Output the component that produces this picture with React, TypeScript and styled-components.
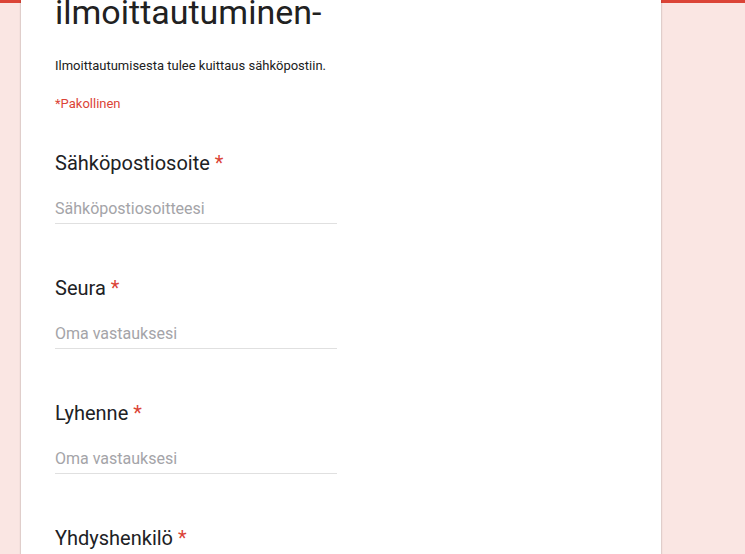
import styled, { createGlobalStyle } from 'styled-components';

const GlobalStyle = createGlobalStyle`
  html, body {
    margin: 0;
    padding: 0;
    background: #fae6e3;
    overflow: hidden;
  }
`;

const questions = [
  { label: 'Sähköpostiosoite', placeholder: 'Sähköpostiosoitteesi' },
  { label: 'Seura', placeholder: 'Oma vastauksesi' },
  { label: 'Lyhenne', placeholder: 'Oma vastauksesi' },
  { label: 'Yhdyshenkilö', placeholder: 'Oma vastauksesi' },
];

const App = () => {
  return (
    <Page>
      <GlobalStyle />
      <Card>
        <Title>ilmoittautuminen-</Title>
        <Description>Ilmoittautumisesta tulee kuittaus sähköpostiin.</Description>
        <Required>*Pakollinen</Required>
        {questions.map((q) => (
          <Question key={q.label}>
            <Label>
              {q.label} <Star>*</Star>
            </Label>
            <Input placeholder={q.placeholder} />
          </Question>
        ))}
      </Card>
    </Page>
  );
};

export default App;

const Page = styled.div`
  height: 554px;
  border-top: 3px solid #db4437;
  padding-left: 21px;
  box-sizing: border-box;
  font-family: Roboto, 'Liberation Sans', sans-serif;
`;

const Card = styled.div`
  display: flex;
  flex-direction: column;
  align-items: flex-start;
  width: 640px;
  height: 600px;
  margin-top: -3px;
  background: #fff;
  box-shadow: 0 0 2px rgba(0, 0, 0, 0.2), 0 2px 2px rgba(0, 0, 0, 0.14);
  padding: 0 34px;
  box-sizing: border-box;
`;

const Title = styled.div`
  font-size: 34px;
  line-height: 40px;
  margin-top: -8px;
  color: #212121;
`;

const Description = styled.div`
  font-size: 13px;
  line-height: 18px;
  margin-top: 25px;
  color: #212121;
`;

const Required = styled.div`
  font-size: 13px;
  line-height: 18px;
  margin-top: 20px;
  color: #db4437;
`;

const Question = styled.div`
  display: flex;
  flex-direction: column;
  margin-top: 38px;
  & + & {
    margin-top: 52px;
  }
`;

const Label = styled.div`
  font-size: 20px;
  line-height: 24px;
  color: #202124;
`;

const Star = styled.span`
  color: #db4437;
`;

const Input = styled.input`
  width: 282px;
  margin-top: 24px;
  padding: 0 0 4px;
  border: none;
  border-bottom: 1px solid #e0e0e0;
  outline: none;
  font-family: Roboto, 'Liberation Sans', sans-serif;
  font-size: 16px;
  line-height: 20px;
  color: #212121;
  background: transparent;
  &::placeholder {
    color: #a4a4a8;
  }
`;
